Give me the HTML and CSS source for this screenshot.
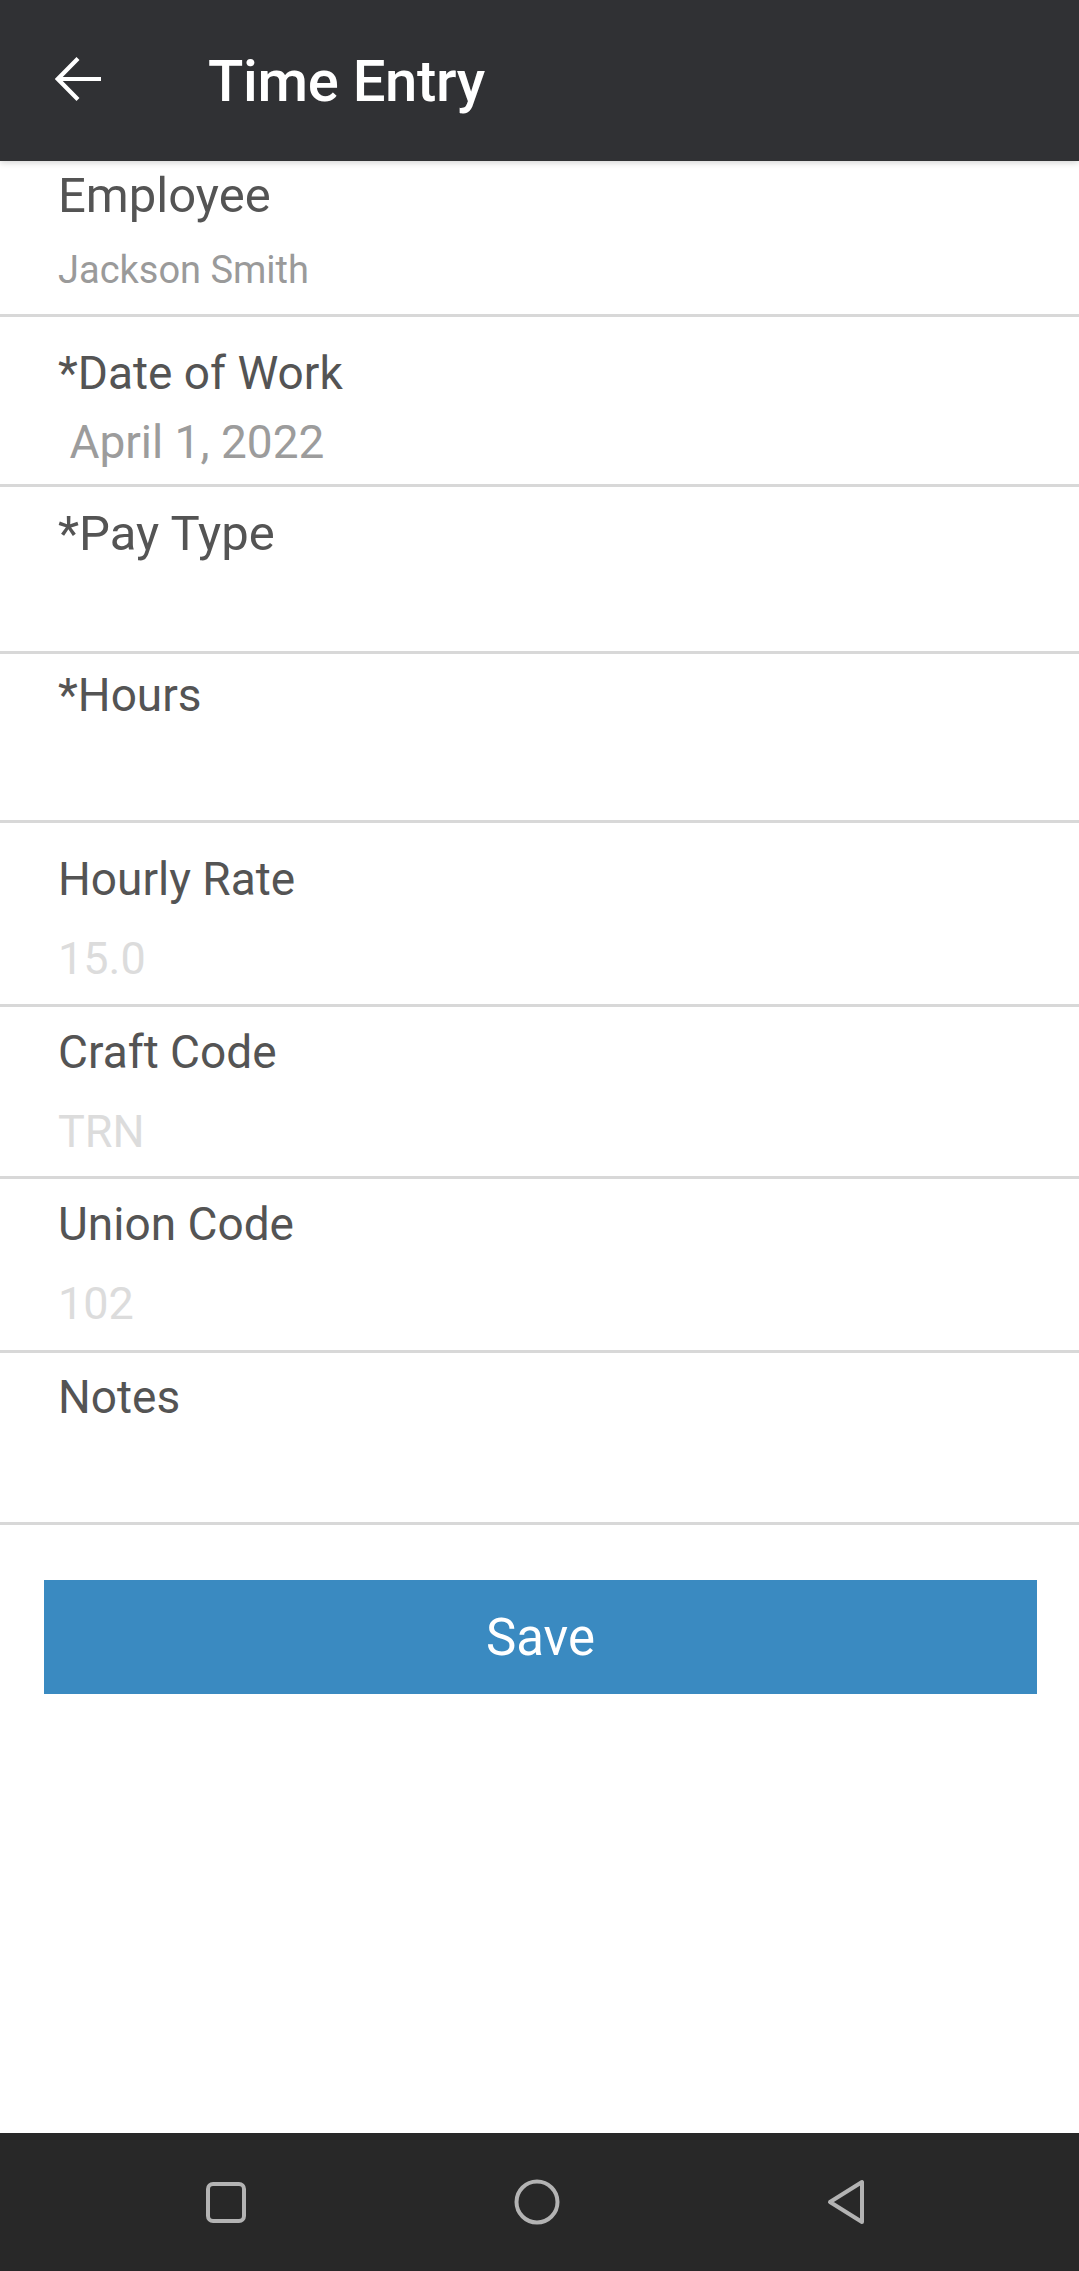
FILE: index.html
```html
<!DOCTYPE html>
<html lang="en">
<head>
  <meta charset="UTF-8">
  <title>Time Entry</title>
  <link rel="stylesheet" href="styles.css">
</head>
<body>

  <header class="toolbar">
    <svg class="back-icon" viewBox="0 0 46 46" width="46" height="46">
      <path d="M46 23 H4 M23 2.5 L2.8 23 L23 43.5" fill="none" stroke="#fff" stroke-width="4.2"/>
    </svg>
    <h1 class="toolbar-title">Time Entry</h1>
  </header>

  <main class="form">
    <div class="field field-employee">
      <div class="field-label big">Employee</div>
      <div class="field-value small">Jackson Smith</div>
    </div>
    <div class="field field-date">
      <div class="field-label">*Date of Work</div>
      <div class="field-value date">&nbsp;April 1, 2022</div>
    </div>
    <div class="field field-pay">
      <div class="field-label big">*Pay Type</div>
    </div>
    <div class="field field-hours">
      <div class="field-label">*Hours</div>
    </div>
    <div class="field field-rate">
      <div class="field-label">Hourly Rate</div>
      <div class="field-value disabled">15.0</div>
    </div>
    <div class="field field-craft">
      <div class="field-label">Craft Code</div>
      <div class="field-value disabled">TRN</div>
    </div>
    <div class="field field-union">
      <div class="field-label">Union Code</div>
      <div class="field-value disabled">102</div>
    </div>
    <div class="field field-notes">
      <div class="field-label">Notes</div>
    </div>

    <button class="save-btn">Save</button>
  </main>

  <nav class="sys-nav">
    <svg viewBox="0 0 40 41" width="40" height="41">
      <rect x="2" y="2" width="36" height="37" rx="5" fill="none" stroke="#b3b3b3" stroke-width="4"/>
    </svg>
    <svg viewBox="0 0 46 46" width="46" height="46">
      <circle cx="23" cy="23" r="20.5" fill="none" stroke="#b3b3b3" stroke-width="4"/>
    </svg>
    <svg viewBox="0 0 38 46" width="38" height="46">
      <path d="M35 3 L35 43 L3 23 Z" fill="none" stroke="#b3b3b3" stroke-width="4" stroke-linejoin="round"/>
    </svg>
  </nav>

</body>
</html>
```

FILE: styles.css
```css
body {
  margin: 0;
  width: 1079px;
  min-height: 2271px;
  display: flex;
  flex-direction: column;
  font-family: Roboto, "Noto Sans", sans-serif;
  background: #ffffff;
  color: #545454;
}
.toolbar {
  height: 161px;
  box-sizing: border-box;
  background: #303134;
  display: flex;
  align-items: center;
  padding-left: 55px;
  box-shadow: 0 2px 6px rgba(0,0,0,0.16);
  position: relative;
  z-index: 1;
}
.back-icon {
  margin-top: -4px;
}
.toolbar-title {
  margin: 0 0 0 107px;
  color: #ffffff;
  font-size: 58px;
  font-weight: 500;
  letter-spacing: -0.3px;
}
.form {
  flex: 1;
  display: flex;
  flex-direction: column;
}
.field {
  box-sizing: border-box;
  border-bottom: 3px solid #d8d8d8;
  padding: 14px 58px 0;
  height: 168px;
}
.field-employee { height: 156px; padding-top: 6px; }
.field-date     { height: 170px; padding-top: 28px; }
.field-pay      { height: 167px; padding-top: 18px; }
.field-hours    { height: 169px; padding-top: 13px; }
.field-rate     { height: 184px; padding-top: 28px; }
.field-craft    { height: 172px; padding-top: 17px; }
.field-union    { height: 174px; padding-top: 17px; }
.field-notes    { height: 172px; padding-top: 16px; }

.field-label {
  font-size: 46px;
  line-height: 57px;
}
.field-label.big {
  font-size: 49px;
}
.field-value {
  margin-top: 24px;
  font-size: 45px;
  line-height: 53px;
}
.field-value.small {
  font-size: 38px;
  line-height: 45px;
  color: #9a9a9a;
}
.field-value.date {
  margin-top: 14px;
  font-size: 46px;
  color: #9c9c9c;
}
.field-value.disabled {
  color: #dcdcdc;
}
.save-btn {
  margin: 55px 42px 0 44px;
  height: 114px;
  border: none;
  border-radius: 0;
  background: #3a8ac1;
  color: #ffffff;
  font-family: Roboto, sans-serif;
  font-size: 51px;
  padding: 0;
}
.sys-nav {
  height: 138px;
  background: #282828;
  display: flex;
  align-items: center;
  justify-content: space-between;
  padding: 0 214px 0 206px;
}
```
